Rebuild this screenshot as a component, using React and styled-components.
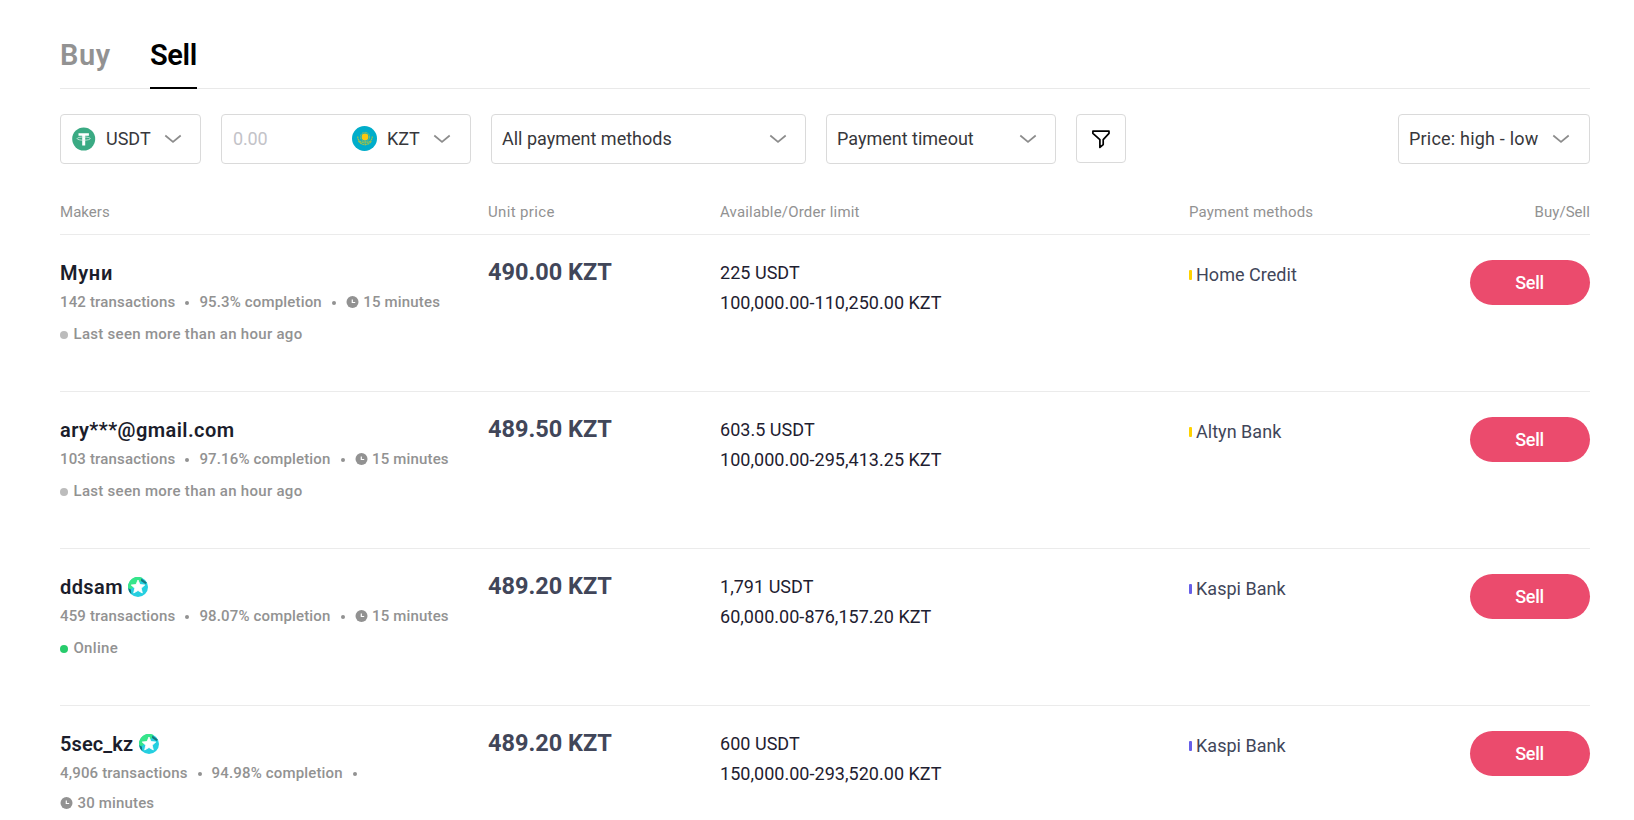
import React from "react";
import styled, { createGlobalStyle } from "styled-components";

const GlobalStyle = createGlobalStyle`
  * { box-sizing: border-box; }
  html { overflow: hidden; }
  body {
    margin: 0;
    height: 820px;
    overflow: hidden;
    background: #fff;
    font-family: Roboto, "Liberation Sans", sans-serif;
    color: #1e2030;
  }
`;

const Page = styled.main`
  width: 1530px;
  margin-left: 60px;
`;

const Tabs = styled.nav`
  display: flex;
  gap: 40px;
  height: 89px;
  padding-top: 20px;
  border-bottom: 1px solid #e9e9e9;
`;

const Tab = styled.a`
  width: ${(p) => p.$width}px;
  height: 69px;
  line-height: 70px;
  font-size: 29px;
  font-weight: 600;
  white-space: nowrap;
  letter-spacing: ${(p) => p.$track}px;
  color: ${(p) => (p.$active ? "#000" : "#929292")};
  border-bottom: 2px solid ${(p) => (p.$active ? "#000" : "transparent")};
`;

const Filters = styled.div`
  display: flex;
  align-items: flex-start;
  gap: 20px;
  margin-top: 25px;
`;

const Box = styled.div`
  display: flex;
  align-items: center;
  width: ${(p) => p.$width}px;
  height: 50px;
  padding: 0 ${(p) => p.$right ?? 18}px 1px ${(p) => p.$left ?? 10}px;
  border: 1px solid #dadada;
  border-radius: 4px;
  font-size: 18px;
  color: #37373b;
  white-space: nowrap;
`;

const IconBox = styled.button`
  display: grid;
  place-items: center;
  width: 50px;
  height: 49px;
  padding: 0;
  background: #fff;
  border: 1px solid #dadada;
  border-radius: 4px;
`;

const Push = styled.div`
  margin-left: auto;
`;

const Label = styled.span`
  flex: 1;
  letter-spacing: ${(p) => p.$track ?? 0}px;
`;

const Code = styled.span`
  width: ${(p) => p.$width}px;
  margin-left: 10px;
`;

const Placeholder = styled.span`
  flex: 1;
  color: #c3c3c8;
  letter-spacing: -0.2px;
`;

const columns = `
  display: grid;
  grid-template-columns: 428px 232px 469px 281px 120px;
`;

const TableHead = styled.div`
  ${columns}
  height: 71px;
  padding-top: 33px;
  border-bottom: 1px solid #ebebeb;
  font-size: 15px;
  line-height: 30px;
  letter-spacing: 0.18px;
  color: #929292;
`;

const HeadCell = styled.span`
  text-align: ${(p) => (p.$end ? "right" : "left")};
  letter-spacing: ${(p) => p.$track ?? 0.18}px;
`;

const Offer = styled.article`
  ${columns}
  height: 157px;
  border-bottom: 1px solid #ebebeb;
  &:last-child {
    height: 114px;
    border-bottom: 0;
  }
`;

const Name = styled.div`
  display: flex;
  align-items: center;
  gap: 5.5px;
  height: 28px;
  margin-top: 24px;
  font-size: 20px;
  font-weight: 600;
  letter-spacing: ${(p) => p.$track}px;
  color: #1b1d2b;
`;

const Stats = styled.div`
  display: flex;
  flex-wrap: wrap;
  align-items: center;
  width: 400px;
  font-size: 15px;
  font-weight: 500;
  line-height: 30px;
  letter-spacing: 0.16px;
  color: #929292;
`;

const Bullet = styled.i`
  width: 4px;
  height: 4px;
  margin: 2px 10px 0;
  border-radius: 50%;
  background: #929292;
`;

const Duration = styled.span`
  display: flex;
  align-items: center;
  gap: 4.5px;
`;

const Presence = styled.div`
  display: flex;
  align-items: center;
  gap: 5.5px;
  margin-top: 2px;
  font-size: 15px;
  font-weight: 500;
  line-height: 30px;
  letter-spacing: 0.29px;
  color: #929292;
  &::before {
    content: "";
    width: 8px;
    height: 8px;
    margin-top: 2px;
    border-radius: 50%;
    background: ${(p) => (p.$online ? "#27cc6c" : "#bcbcbc")};
  }
`;

const Price = styled.div`
  margin-top: 22px;
  font-size: 23.5px;
  font-weight: 700;
  line-height: 30px;
  color: #414659;
`;

const Limits = styled.div`
  margin-top: 23px;
  font-size: 18px;
  line-height: 30px;
  letter-spacing: 0.03px;
`;

const Method = styled.div`
  display: flex;
  align-items: center;
  gap: 4px;
  height: 30px;
  margin-top: 24px;
  font-size: 18px;
  letter-spacing: 0.03px;
  color: #414659;
  &::before {
    content: "";
    width: 3px;
    height: 10px;
    margin-top: 2px;
    border-radius: 1px;
    background: ${(p) => p.$accent};
  }
`;

const SellButton = styled.button`
  width: 120px;
  height: 45px;
  margin-top: 25px;
  padding: 0 1px 0 0;
  border: 0;
  border-radius: 23px;
  background: #eb4b6d;
  color: #fff;
  font: 500 18px Roboto, sans-serif;
  letter-spacing: -0.3px;
`;

const ChevronIcon = () => (
  <svg width="18" height="10" viewBox="0 0 18 10" fill="none">
    <path d="M1.3 1.5L9 8L16.7 1.5" stroke="#8c8c8c" strokeWidth="1.7" />
  </svg>
);

const TetherIcon = () => (
  <svg width="24" height="24" viewBox="0 0 24 24">
    <circle cx="11.7" cy="12" r="11.5" fill="#3aaa83" />
    <path d="M6.5 6.2H16.9V8.8H13.2V18.4H10.2V8.8H6.5Z" fill="#fff" />
    <ellipse cx="11.7" cy="11.6" rx="6.6" ry="1.6" fill="none" stroke="#d5eee5" strokeWidth=".8" />
  </svg>
);

const KazakhstanFlag = () => (
  <svg width="25" height="25" viewBox="0 0 25 25">
    <circle cx="12.5" cy="12.5" r="12.5" fill="#00adca" />
    <circle cx="13" cy="11" r="4.6" fill="none" stroke="#bfc83e" strokeWidth="1" strokeDasharray=".9 .6" />
    <circle cx="13" cy="11" r="3.4" fill="#fcc80f" />
    <path d="M5.7 10.5C5.8 14 8 16.5 12 16.4Q13 17.2 14 16.4C18 16.5 20.2 14 20.3 10.5M6.5 15C8.5 18 10.5 18 13 18.8C15.5 18 17.5 18 19.5 15" fill="none" stroke="#9fc04a" strokeWidth="1.3" strokeDasharray="2 .5" />
  </svg>
);

const FunnelIcon = () => (
  <svg width="20" height="20" viewBox="0 0 20 20" fill="none">
    <path d="M1.9 2.2H18V4.4L12.2 10.6V15.6L8.9 18.4V10.6L1.9 4.4Z" stroke="#000" strokeWidth="1.7" strokeLinejoin="round" />
  </svg>
);

const ClockIcon = () => (
  <svg width="13" height="13" viewBox="0 0 13 13">
    <circle cx="6.5" cy="6" r="6" fill="#929292" />
    <path d="M6.3 3.5V6.5H9.2" fill="none" stroke="#fff" strokeWidth="1.2" />
  </svg>
);

const StarBadge = () => (
  <svg width="20" height="20" viewBox="0 0 20 20">
    <circle cx="10" cy="10" r="10" fill="#25cfe0" />
    <path d="M0 11.5A10 10 0 0 1 14.5 1L13 4L3 12Z" fill="#36e58a" />
    <path d="M13.3 1.6L18.8 5.4L17.4 7L13 4ZM.1 11.2L2.8 12.5L3.4 17.2Q.6 14.8 .1 11.2Z" fill="#15777f" />
    <path d="M10 3L12 7.5L16.8 8L13.2 11.2L14.3 16L10 13.5L5.7 16L6.8 11.2L3.2 8L8 7.5Z" fill="#fff" stroke="#fff" strokeWidth=".8" strokeLinejoin="round" />
  </svg>
);

const YELLOW = "#ffd200";
const VIOLET = "#675fe8";

const offers = [
  { name: "Муни", track: 0.7, deals: "142", rate: "95.3%", time: "15", seen: "Last seen more than an hour ago", price: "490.00", available: "225", limit: "100,000.00-110,250.00", method: "Home Credit", accent: YELLOW },
  { name: "ary***@gmail.com", track: 0.43, deals: "103", rate: "97.16%", time: "15", seen: "Last seen more than an hour ago", price: "489.50", available: "603.5", limit: "100,000.00-295,413.25", method: "Altyn Bank", accent: YELLOW },
  { name: "ddsam", track: 0.4, badge: true, deals: "459", rate: "98.07%", time: "15", seen: "Online", online: true, price: "489.20", available: "1,791", limit: "60,000.00-876,157.20", method: "Kaspi Bank", accent: VIOLET },
  { name: "5sec_kz", track: 0.1, badge: true, deals: "4,906", rate: "94.98%", time: "30", price: "489.20", available: "600", limit: "150,000.00-293,520.00", method: "Kaspi Bank", accent: VIOLET },
];

const OfferRow = ({ offer }) => (
  <Offer>
    <div>
      <Name $track={offer.track}>
        {offer.name}
        {offer.badge && <StarBadge />}
      </Name>
      <Stats>
        {offer.deals} transactions
        <Bullet />
        {offer.rate} completion
        <Bullet />
        <Duration>
          <ClockIcon />
          {offer.time} minutes
        </Duration>
      </Stats>
      {offer.seen && <Presence $online={offer.online}>{offer.seen}</Presence>}
    </div>
    <Price>{offer.price} KZT</Price>
    <Limits>
      <div>{offer.available} USDT</div>
      <div>{offer.limit} KZT</div>
    </Limits>
    <Method $accent={offer.accent}>{offer.method}</Method>
    <SellButton>Sell</SellButton>
  </Offer>
);

export default function App() {
  return (
    <>
      <GlobalStyle />
      <Page>
        <Tabs>
          <Tab $width={50} $track={0.6}>Buy</Tab>
          <Tab $width={47} $track={-0.4} $active>Sell</Tab>
        </Tabs>
        <Filters>
          <Box $width={141} $left={11}>
            <TetherIcon />
            <Code $width={58}>USDT</Code>
            <ChevronIcon />
          </Box>
          <Box $width={250} $left={11} $right={19}>
            <Placeholder>0.00</Placeholder>
            <KazakhstanFlag />
            <Code $width={46}>KZT</Code>
            <ChevronIcon />
          </Box>
          <Box $width={315}>
            <Label>All payment methods</Label>
            <ChevronIcon />
          </Box>
          <Box $width={230}>
            <Label>Payment timeout</Label>
            <ChevronIcon />
          </Box>
          <IconBox aria-label="Filter">
            <FunnelIcon />
          </IconBox>
          <Push>
            <Box $width={192} $right={19}>
              <Label $track={0.2}>Price: high - low</Label>
              <ChevronIcon />
            </Box>
          </Push>
        </Filters>
        <TableHead>
          <HeadCell $track={0.05}>Makers</HeadCell>
          <HeadCell $track={0.35}>Unit price</HeadCell>
          <HeadCell>Available/Order limit</HeadCell>
          <HeadCell>Payment methods</HeadCell>
          <HeadCell $track={0.05} $end>Buy/Sell</HeadCell>
        </TableHead>
        {offers.map((offer) => (
          <OfferRow key={offer.name} offer={offer} />
        ))}
      </Page>
    </>
  );
}
